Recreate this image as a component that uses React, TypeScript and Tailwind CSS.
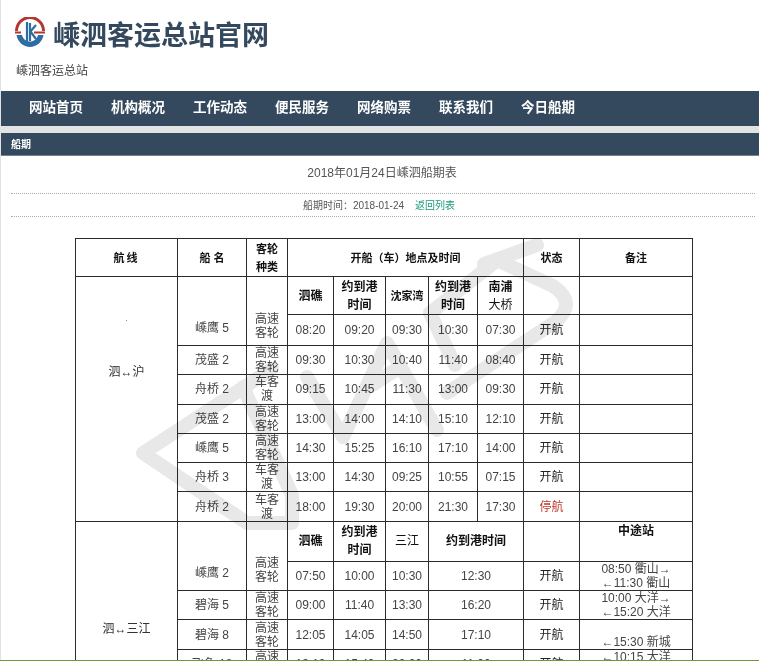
import React from 'react'

const CJK = "font-['Liberation_Sans','Noto_Sans_CJK_SC',sans-serif]"
const line = 'border border-[#2b2b2b]'

type Trip = {
  ship: string
  type: string[]
  times: string[]
  status: string
  note?: string[]
}

const typeFast = ['高速', '客轮']
const typeFerry = ['车客', '渡']

const routeOne: Trip[] = [
  { ship: '茂盛 2', type: typeFast, times: ['09:30', '10:30', '10:40', '11:40', '08:40'], status: '开航' },
  { ship: '舟桥 2', type: typeFerry, times: ['09:15', '10:45', '11:30', '13:00', '09:30'], status: '开航' },
  { ship: '茂盛 2', type: typeFast, times: ['13:00', '14:00', '14:10', '15:10', '12:10'], status: '开航' },
  { ship: '嵊鹰 5', type: typeFast, times: ['14:30', '15:25', '16:10', '17:10', '14:00'], status: '开航' },
  { ship: '舟桥 3', type: typeFerry, times: ['13:00', '14:30', '09:25', '10:55', '07:15'], status: '开航' },
  { ship: '舟桥 2', type: typeFerry, times: ['18:00', '19:30', '20:00', '21:30', '17:30'], status: '停航' },
]

const routeTwo: Trip[] = [
  { ship: '碧海 5', type: typeFast, times: ['09:00', '11:40', '13:30', '16:20'], status: '开航', note: ['10:00 大洋→', '←15:20 大洋'] },
  { ship: '碧海 8', type: typeFast, times: ['12:05', '14:05', '14:50', '17:10'], status: '开航', note: ['', '←15:30 新城'] },
  { ship: '飞鱼 18', type: typeFast, times: ['13:10', '15:40', '20:00', '11:00'], status: '开航', note: ['←10:15 大洋', '←16:50 大洋'] },
]

function Logo() {
  return (
    <svg width="30" height="30" viewBox="0 0 30 30" className="shrink-0">
      <path d="M1.500 14 A13.500 13.500 0 0 1 28.500 14" fill="none" stroke="#b5362c" strokeWidth="3" />
      <path d="M0 15.500 H6 M19 15.500 H30" stroke="#b5362c" strokeWidth="2" />
      <path d="M1.500 18 H7 C8 22 11 24.500 15 24.500 C19 24.500 22 22 23 18 H28.500 C27.500 25 21.500 30 15 30 C8.500 30 2.500 25 1.500 18 Z" fill="#2e6da4" />
      <path d="M12 5 V25 M15 6 V24 M15 15 L21 8 M15.500 14.500 L21 22" fill="none" stroke="#2e6da4" strokeWidth="2.200" />
    </svg>
  )
}

function Watermark() {
  return (
    <svg
      className="absolute left-0 top-0 pointer-events-none mix-blend-multiply"
      width="759"
      height="661"
      viewBox="0 0 759 661"
    >
      <g fill="none" stroke="#e8e8e8" strokeWidth="14" strokeLinejoin="round" strokeLinecap="round">
        <path d="M272 369 L143 453 L247 523 L292 523 L292 495 L243 387" />
        <path d="M307 377 L343 437 L387 343 L437 430" />
        <path d="M372 385 L400 367" />
        <path d="M430 313 L495 262" />
        <path d="M484 264 L537 245" />
        <path d="M497 260 L553 286 Q578 303 555 322 L447 393" />
        <path d="M430 313 L455 365" />
      </g>
    </svg>
  )
}

function TripRow({ trip, wide, rowClass }: { trip: Trip; wide?: boolean; rowClass: string }) {
  return (
    <tr className={rowClass}>
      <td className={`${line} text-center text-[#444]`}>{trip.ship}</td>
      <td className={`${line} text-center text-[#444] leading-[14px]`}>
        {trip.type.map((t) => <div key={t}>{t}</div>)}
      </td>
      {trip.times.map((t, i) => (
        <td key={i} colSpan={wide && i === 3 ? 2 : 1} className={`${line} text-center text-[#444]`}>{t}</td>
      ))}
      <td className={`${line} text-center ${trip.status === '停航' ? 'text-[#c0392b]' : 'text-[#222]'}`}>{trip.status}</td>
      <td className={`${line} text-center text-[#444] leading-[14px]`}>
        {trip.note?.map((n, i) => <div key={i} className="h-[14px]">{n}</div>)}
      </td>
    </tr>
  )
}

function SubHead({ children, colSpan }: { children: React.ReactNode; colSpan?: number }) {
  return (
    <th colSpan={colSpan} className={`${line} text-center font-bold text-[12px] leading-[18px] text-[#111]`}>
      {children}
    </th>
  )
}

function ScheduleTable() {
  return (
    <table className="table-fixed border-collapse w-[617px] text-[12px] ml-[74px]">
      <colgroup>
        <col className="w-[102px]" />
        <col className="w-[69px]" />
        <col className="w-[41px]" />
        <col className="w-[46px]" />
        <col className="w-[52px]" />
        <col className="w-[43px]" />
        <col className="w-[49px]" />
        <col className="w-[46px]" />
        <col className="w-[56px]" />
        <col className="w-[113px]" />
      </colgroup>
      <tbody>
        <tr className="h-[38px]">
          <SubHead><span className="text-[11px] tracking-[2px]">航线</span></SubHead>
          <SubHead><span className="text-[11px]">船 名</span></SubHead>
          <SubHead><span className="text-[11px]">客轮<br />种类</span></SubHead>
          <SubHead colSpan={5}><span className="text-[11px]">开船（车）地点及时间</span></SubHead>
          <SubHead><span className="text-[11px]">状态</span></SubHead>
          <SubHead><span className="text-[11px]">备注</span></SubHead>
        </tr>
        <tr className="h-[38px]">
          <td rowSpan={8} className={`${line} align-top text-center text-[#333]`}>
            <div className="pt-[36px] h-[86px] text-[8px]">.</div>
            <div>泗↔沪</div>
          </td>
          <td rowSpan={2} className={`${line} align-bottom text-center text-[#444] pb-[8px]`}>嵊鹰 5</td>
          <td rowSpan={2} className={`${line} align-bottom text-center text-[#444] leading-[14px] pb-[5px]`}>高速<br />客轮</td>
          <SubHead>泗礁</SubHead>
          <SubHead>约到港<br />时间</SubHead>
          <SubHead><span className="text-[11px]">沈家湾</span></SubHead>
          <SubHead>约到港<br />时间</SubHead>
          <SubHead>南浦<br /><span className="font-normal">大桥</span></SubHead>
          <td className={line}></td>
          <td className={line}></td>
        </tr>
        <tr className="h-[31px]">
          {['08:20', '09:20', '09:30', '10:30', '07:30'].map((t) => (
            <td key={t} className={`${line} text-center text-[#444]`}>{t}</td>
          ))}
          <td className={`${line} text-center text-[#222]`}>开航</td>
          <td className={line}></td>
        </tr>
        {routeOne.map((trip, i) => (
          <TripRow key={i} trip={trip} rowClass="h-[29.300px]" />
        ))}
        <tr className="h-[40px]">
          <td rowSpan={5} className={`${line} align-top text-center text-[#333] pt-[98px]`}>泗↔三江</td>
          <td rowSpan={2} className={`${line} align-bottom text-center text-[#444] pb-[8px]`}>嵊鹰 2</td>
          <td rowSpan={2} className={`${line} align-bottom text-center text-[#444] leading-[14px] pb-[6px]`}>高速<br />客轮</td>
          <SubHead>泗礁</SubHead>
          <SubHead>约到港<br />时间</SubHead>
          <SubHead><span className="font-normal">三江</span></SubHead>
          <SubHead colSpan={2}>约到港时间</SubHead>
          <td className={line}></td>
          <td className={`${line} align-top text-center font-bold text-[#111] leading-[18px]`}>中途站</td>
        </tr>
        <tr className="h-[29px]">
          {['07:50', '10:00', '10:30'].map((t) => (
            <td key={t} className={`${line} text-center text-[#444]`}>{t}</td>
          ))}
          <td colSpan={2} className={`${line} text-center text-[#444]`}>12:30</td>
          <td className={`${line} text-center text-[#222]`}>开航</td>
          <td className={`${line} text-center text-[#444] leading-[14px]`}>
            <div>08:50 衢山→</div>
            <div>←11:30 衢山</div>
          </td>
        </tr>
        {routeTwo.map((trip, i) => (
          <TripRow key={i} trip={trip} wide rowClass="h-[29.500px]" />
        ))}
      </tbody>
    </table>
  )
}

export default function App() {
  const nav = ['网站首页', '机构概况', '工作动态', '便民服务', '网络购票', '联系我们', '今日船期']
  return (
    <div className={`relative h-[661px] w-[759px] overflow-hidden flex flex-col bg-white ${CJK}`}>
      <div className="flex-1 min-h-0 overflow-hidden border-l border-[#e2e2e2]">
        <header className="h-[91px] pl-[14px]">
          <div className="flex items-start gap-[8px] pt-[17px] h-[55px]">
            <Logo />
            <h1 className="text-[27px] leading-[38px] font-bold text-[#34495e]">嵊泗客运总站官网</h1>
          </div>
          <p className="mt-[8px] pl-[1px] text-[12px] leading-[16px] text-[#444]">嵊泗客运总站</p>
        </header>
        <nav className="h-[35px] bg-[#34495e] flex items-center gap-[28px] pl-[28px] text-white font-bold text-[13.500px]">
          {nav.map((item) => (
            <span key={item}>{item}</span>
          ))}
        </nav>
        <div className="h-[7px] bg-[#e1e3e5]"></div>
        <div className="h-[23px] bg-[#34495e] border-b border-[#6f8497] pl-[10px] flex items-center text-white font-bold text-[10px]">
          船期
        </div>
        <h2 className="ml-[10px] mr-[4px] h-[38px] flex items-center justify-center pb-[4px] pr-[2px] text-[12px] text-[#555] border-b border-dotted border-[#aaa]">
          2018年01月24日嵊泗船期表
        </h2>
        <div className="ml-[10px] mr-[4px] h-[23px] flex items-center justify-center gap-[11px] pr-[8px] text-[10px] text-[#555] border-b border-dotted border-[#aaa]">
          <span>船期时间：2018-01-24</span>
          <span className="text-[#1a9a7a]">返回列表</span>
        </div>
        <div className="pt-[21px]">
          <ScheduleTable />
        </div>
      </div>
      <div className="h-[1px] bg-[#6f9a35] shrink-0"></div>
      <Watermark />
    </div>
  )
}
